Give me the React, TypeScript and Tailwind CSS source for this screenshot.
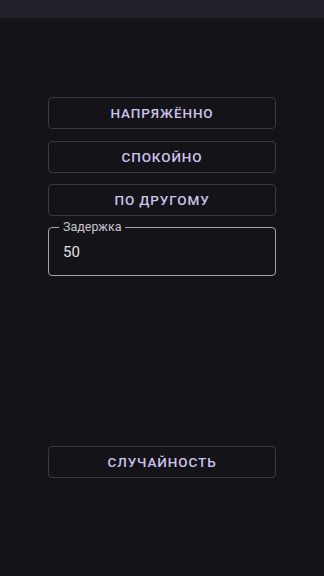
import React from "react";

function OutlineButton({ label, className = "" }: { label: string; className?: string }) {
  return (
    <button
      className={`h-[32px] w-full rounded-[4px] border border-[#3b3a44] bg-transparent text-[13.5px] font-medium uppercase tracking-[0.9px] text-[#cdc4ee] flex items-center justify-center pt-[1px] ${className}`}
    >
      {label}
    </button>
  );
}

export default function App() {
  return (
    <div
      className="h-[576px] w-full bg-[#141318] flex flex-col"
      style={{ fontFamily: "Roboto, 'Noto Sans', sans-serif" }}
    >
      <div className="h-[18px] w-full bg-[#22212b] shrink-0" />
      <div className="flex flex-col px-[48px] pt-[79px]">
        <OutlineButton label="Напряжённо" />
        <OutlineButton label="Спокойно" className="mt-[12px]" />
        <OutlineButton label="По другому" className="mt-[11px]" />
        <div className="relative mt-[11px] h-[49px] rounded-[4px] border border-[#a3a2ab] flex items-center pl-[14px]">
          <span className="absolute left-[10px] top-[-9px] bg-[#141318] px-[4px] text-[12.5px] leading-[16px] text-[#c9c6d0]">
            Задержка
          </span>
          <span className="text-[15px] text-[#e6e1e9] pt-[2px]">50</span>
        </div>
        <OutlineButton label="Случайность" className="mt-[170px]" />
      </div>
    </div>
  );
}
